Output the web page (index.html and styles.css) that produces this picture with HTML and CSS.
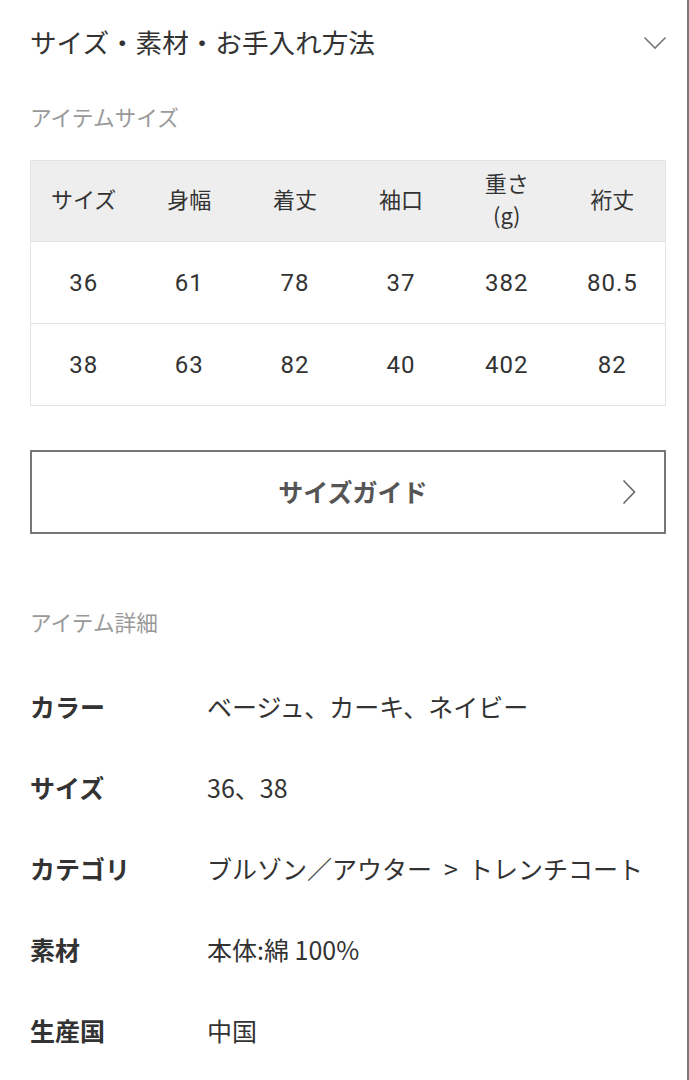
FILE: index.html
```html
<!DOCTYPE html>
<html lang="ja">
<head>
<meta charset="utf-8">
<link rel="stylesheet" href="styles.css">
</head>
<body>
<div class="page">
  <div class="accordion-head">
    <span class="accordion-title">サイズ・素材・お手入れ方法</span>
    <svg class="chev-down" width="24" height="14" viewBox="0 0 24 14"><path d="M1.5 1.5 L12 12 L22.5 1.5" fill="none" stroke="#777" stroke-width="1.6"/></svg>
  </div>
  <div class="sec-title first">アイテムサイズ</div>
  <table class="size-table">
    <thead>
      <tr><th>サイズ</th><th>身幅</th><th>着丈</th><th>袖口</th><th>重さ<br>(g)</th><th>裄丈</th></tr>
    </thead>
    <tbody>
      <tr><td>36</td><td>61</td><td>78</td><td>37</td><td>382</td><td>80.5</td></tr>
      <tr><td>38</td><td>63</td><td>82</td><td>40</td><td>402</td><td>82</td></tr>
    </tbody>
  </table>
  <div class="guide-btn">
    <span class="guide-label">サイズガイド</span>
    <svg class="chev-right" width="14" height="26" viewBox="0 0 14 26"><path d="M1.5 1.5 L12.5 13 L1.5 24.5" fill="none" stroke="#666" stroke-width="1.6"/></svg>
  </div>
  <div class="sec-title second">アイテム詳細</div>
  <div class="details">
    <div class="row"><div class="label">カラー</div><div class="value">ベージュ、カーキ、ネイビー</div></div>
    <div class="row"><div class="label">サイズ</div><div class="value">36、38</div></div>
    <div class="row"><div class="label">カテゴリ</div><div class="value">ブルゾン／アウター<span class="sep">&gt;</span>トレンチコート</div></div>
    <div class="row"><div class="label">素材</div><div class="value">本体:綿 100%</div></div>
    <div class="row"><div class="label">生産国</div><div class="value">中国</div></div>
  </div>
</div>
</body>
</html>
```
FILE: styles.css
```css
html, body {
  margin: 0;
  padding: 0;
  background: #fff;
}
body {
  font-family: "Noto Sans CJK JP", "Noto Sans", sans-serif;
  color: #333;
  width: 689px;
  height: 1080px;
  overflow: hidden;
}
.page {
  box-sizing: border-box;
  width: 689px;
  min-height: 1080px;
  padding: 0 21px 0 30px;
  border-right: 2px solid #7a7a7a;
}
.accordion-head {
  height: 86px;
  display: flex;
  align-items: center;
  justify-content: space-between;
}
.accordion-title {
  font-size: 26.6px;
  line-height: 30px;
  color: #333;
  margin-top: -2px;
}
.chev-down {
  margin-right: -1px;
}
.sec-title {
  font-size: 21.7px;
  line-height: 30px;
  color: #999;
}
.sec-title.first { margin-top: 16px; }
.size-table {
  margin-top: 28px;
  width: 100%;
  border-collapse: collapse;
  table-layout: fixed;
  border: 1px solid #e3e3e3;
}
.size-table th, .size-table td {
  text-align: center;
  font-weight: normal;
  color: #333;
  padding: 0;
}
.size-table th {
  background: #eeeeee;
  height: 81px;
  font-size: 22px;
  line-height: 32px;
  padding-bottom: 6px;
  box-sizing: border-box;
}
.size-table td {
  height: 81px;
  border-top: 1px solid #e3e3e3;
  font-family: "Roboto", "Noto Sans CJK JP", sans-serif;
  font-size: 24px;
  line-height: 30px;
  letter-spacing: 1px;
}
.guide-btn {
  margin-top: 44px;
  box-sizing: border-box;
  height: 84px;
  border: 2px solid #777;
  display: flex;
  align-items: center;
  justify-content: center;
  position: relative;
}
.guide-label {
  font-size: 25px;
  font-weight: bold;
  color: #555;
  margin-left: 10px;
  margin-top: -2px;
}
.chev-right {
  position: absolute;
  right: 28px;
  top: 27px;
}
.sec-title.second { margin-top: 73px; }
.details { margin-top: 28px; }
.row {
  display: flex;
  align-items: center;
  height: 81px;
}
.label {
  width: 177px;
  flex: none;
  font-size: 25px;
  font-weight: bold;
  color: #333;
}
.value {
  font-size: 25px;
  color: #333;
}
.sep {
  margin: 0 10px 0 12px;
}
```
